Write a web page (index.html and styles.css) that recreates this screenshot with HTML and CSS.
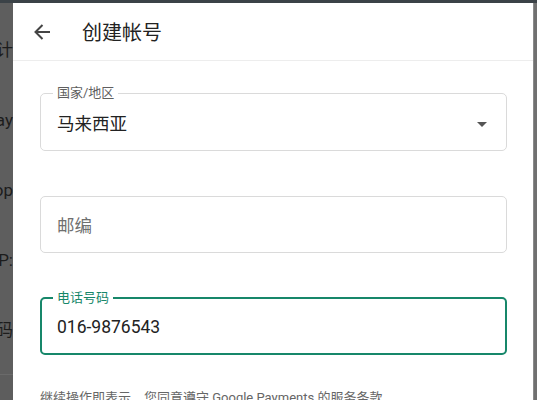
FILE: index.html
```html
<!DOCTYPE html>
<html lang="zh-CN">
<head>
  <meta charset="UTF-8">
  <title>创建帐号</title>
  <meta name="viewport" content="width=device-width, initial-scale=1">
  <link rel="stylesheet" href="styles.css">
</head>
<body>
  <div class="topbar"></div>
  <div class="stage">
    <div class="backdrop">
      <div class="peek">会计</div>
      <div class="peek">Google Pay</div>
      <div class="peek">Shop</div>
      <div class="peek">Google P:</div>
      <div class="peek">号码</div>
    </div>
    <div class="dialog">
      <header class="head">
        <svg class="back" width="18" height="18" viewBox="0 0 18 18">
          <path d="M17 9H2.5M9.5 2L2.5 9l7 7" fill="none" stroke="#444" stroke-width="2"/>
        </svg>
        <h1>创建帐号</h1>
      </header>
      <div class="body">
        <fieldset class="field">
          <legend>国家/地区</legend>
          <div class="value">
            <span>马来西亚</span>
            <span class="caret"></span>
          </div>
        </fieldset>
        <div class="field plain">
          <span class="hint">邮编</span>
        </div>
        <fieldset class="field focus">
          <legend>电话号码</legend>
          <div class="value">016-9876543</div>
        </fieldset>
        <p class="terms">继续操作即表示，您同意遵守 Google Payments 的服务条款</p>
      </div>
    </div>
    <div class="edge"></div>
  </div>
</body>
</html>
```
FILE: styles.css
```css
html, body { margin:0; height:100%; overflow:hidden; }
body { font-family: Roboto, "Noto Sans CJK SC", sans-serif; background:#5d5d5d; }
.topbar { height:3px; background:#3b4247; }
.stage { display:flex; height:397px; }
.backdrop { width:13px; flex-shrink:0; overflow:hidden; background:#5e5e5e; color:#1c1c1c; font-size:17px; display:flex; flex-direction:column; align-items:flex-end; padding-top:37px; gap:50px; border-bottom:1px solid #6a6a6a; height:334px; }
.peek { white-space:nowrap; line-height:20px; }
.dialog { width:520px; flex-shrink:0; background:#fff; display:flex; flex-direction:column; overflow:hidden; }
.edge { width:3px; background:#707070; border-left:1px solid #8a8a8a; }

.head { height:57px; flex-shrink:0; display:flex; align-items:center; padding-left:20px; border-bottom:1px solid #ededed; }
.back { margin-right:31px; }
.head h1 { margin:0; font-size:20px; font-weight:400; color:#222; }

.body { padding:24px 26px 0 27px; flex-shrink:0; }
.field { margin:0; padding:0 16px; border:1px solid #dadada; border-radius:5px; min-width:0; }
legend { padding:0 4px; margin-left:-4px; font-size:13px; line-height:16px; color:#5f5f5f; }
.value { height:46px; line-height:46px; font-size:17.5px; color:#222; display:flex; justify-content:space-between; align-items:center; margin-bottom:3px; }
.caret { width:0; height:0; border-left:5.5px solid transparent; border-right:5.5px solid transparent; border-top:5.5px solid #555; margin-right:3px; }
.plain { height:57px; box-sizing:border-box; display:flex; align-items:center; margin-top:45px; }
.hint { font-size:17.5px; color:#6f6f6f; }
.focus { margin-top:37px; border:2px solid #17876a; padding:0 15px; }
.focus legend { color:#17876a; }
.focus .value { height:42px; line-height:42px; margin-bottom:5px; }
.terms { margin:33px 0 0 0; font-size:13px; line-height:20px; color:#666; white-space:nowrap; }
```
